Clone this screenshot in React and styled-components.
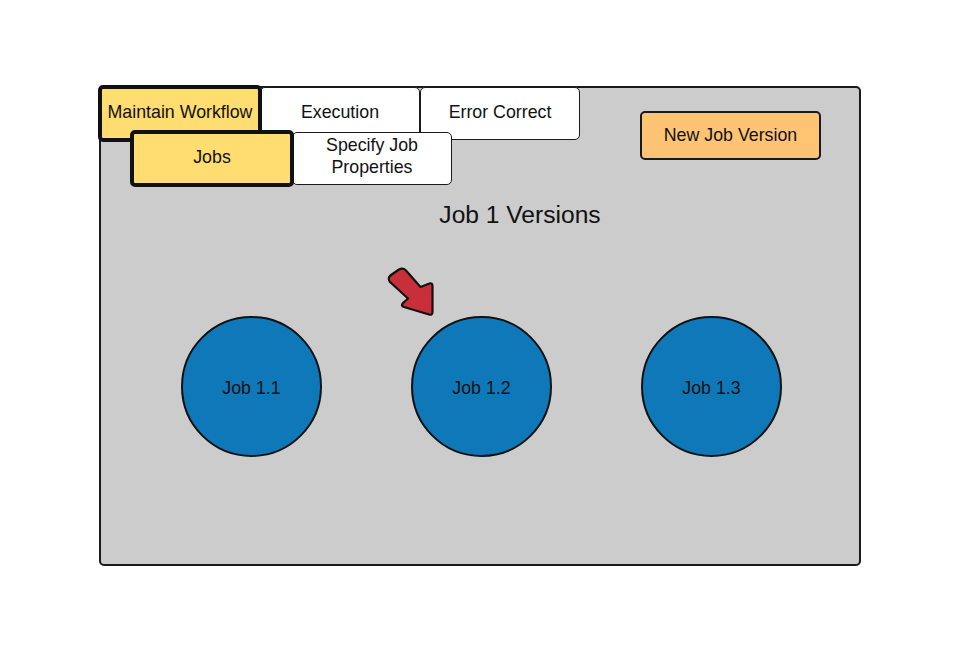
import React from 'react';
import styled, { createGlobalStyle, css } from 'styled-components';

const GlobalStyle = createGlobalStyle`
  body {
    margin: 0;
    background: #fff;
    font-family: 'Liberation Sans', Arial, sans-serif;
    color: #111;
  }
`;

const Page = styled.div`
  width: 956px;
  height: 658px;
  padding: 86px 0 0 99px;
  box-sizing: border-box;
`;

const Panel = styled.div`
  width: 762px;
  height: 480px;
  box-sizing: border-box;
  border: 2px solid #1a1a1a;
  border-radius: 5px;
  background: #cccccc;
  display: flex;
  flex-direction: column;
`;

const Header = styled.div`
  display: flex;
  justify-content: space-between;
  align-items: flex-start;
`;

const TabBlock = styled.div`
  display: flex;
  flex-direction: column;
  margin: -1px 0 0 -1px;
`;

const TabRow = styled.div`
  display: flex;
  ${(p) =>
    p.$sub &&
    css`
      margin: -8px 0 0 32px;
    `}
`;

const Tab = styled.div`
  box-sizing: border-box;
  width: 160px;
  height: 53px;
  border: 1.7px solid #1a1a1a;
  border-radius: 5px;
  background: #fff;
  display: flex;
  align-items: center;
  justify-content: center;
  text-align: center;
  font-size: 17.8px;
  line-height: 22px;
  padding-bottom: ${(p) => (p.$tall ? 5 : 3)}px;
  position: relative;
  ${(p) =>
    p.$active &&
    css`
      width: 164px;
      height: 57px;
      margin: -2px;
      border: 4px solid #111;
      background: #ffdd71;
      z-index: 1;
    `}
`;

const NewButton = styled.button`
  box-sizing: border-box;
  width: 181px;
  height: 49px;
  margin: 23px 38px 0 0;
  border: 2px solid #1a1a1a;
  border-radius: 5px;
  background: #ffc374;
  font-family: inherit;
  font-size: 17.8px;
  color: #111;
`;

const Title = styled.h1`
  margin: 16px 0 0;
  padding-left: 80px;
  text-align: center;
  font-size: 24.6px;
  line-height: 28px;
  font-weight: 400;
`;

const CircleRow = styled.div`
  display: flex;
  gap: 89px;
  margin-top: 87px;
  padding-left: 80px;
`;

const Circle = styled.div`
  box-sizing: border-box;
  width: 141px;
  height: 141px;
  padding-top: 3px;
  border: 2px solid #111;
  border-radius: 50%;
  background: #0e78b9;
  display: flex;
  align-items: center;
  justify-content: center;
  font-size: 17.8px;
  position: relative;
`;

const Pointer = styled.svg`
  position: absolute;
  left: -31px;
  top: -56px;
  width: 60px;
  height: 60px;
`;

const Arrow = () => (
  <Pointer viewBox="0 0 60 60">
    <path
      d="M8 20 Q5 16 9 13 L17 7.5 Q21 5.5 24 8.5 L38.5 25 L47.5 21.5 Q50.5 20.5 50.5 24 L50.5 50 Q50.5 53.5 47 52.5 L22 45 Q18.5 44 21 41 L26 36.5 Z"
      fill="#c92f3b"
      stroke="#111"
      strokeWidth="2.2"
      strokeLinejoin="round"
    />
  </Pointer>
);

const jobs = ['Job 1.1', 'Job 1.2', 'Job 1.3'];

const App = () => (
  <Page>
    <GlobalStyle />
    <Panel>
      <Header>
        <TabBlock>
          <TabRow>
            <Tab $active>Maintain Workflow</Tab>
            <Tab>Execution</Tab>
            <Tab>Error Correct</Tab>
          </TabRow>
          <TabRow $sub>
            <Tab $active>Jobs</Tab>
            <Tab $tall>
              Specify Job
              <br />
              Properties
            </Tab>
          </TabRow>
        </TabBlock>
        <NewButton>New Job Version</NewButton>
      </Header>
      <Title>Job 1 Versions</Title>
      <CircleRow>
        {jobs.map((job, i) => (
          <Circle key={job}>
            {i === 1 && <Arrow />}
            {job}
          </Circle>
        ))}
      </CircleRow>
    </Panel>
  </Page>
);

export default App;
